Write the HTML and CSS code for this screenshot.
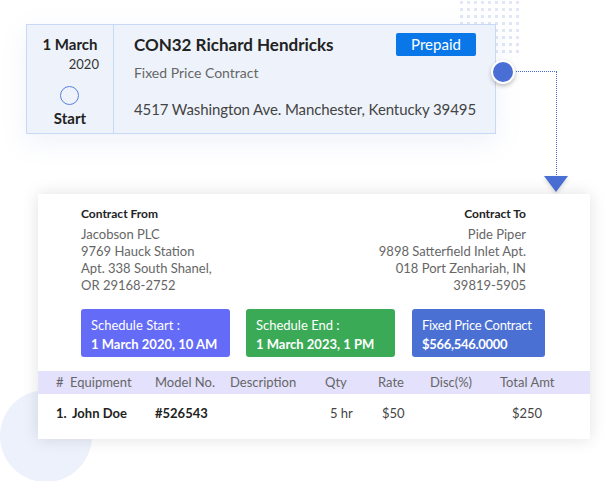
FILE: index.html
```html
<!DOCTYPE html>
<html lang="en">
<head>
    <meta charset="UTF-8">
    <meta name="viewport" content="width=device-width, initial-scale=1.0">
    <title>Contract</title>
    <link rel="stylesheet" href="styles.css">
</head>
<body>
    <div class="scene">
        <div class="dots"></div>
        <div class="blob"></div>
        <div class="link-h"></div>
        <div class="link-v"></div>
        <div class="arrow"></div>

        <div class="summary">
            <div class="date-col">
                <div class="day">1 March</div>
                <div class="year">2020</div>
                <div class="ring"></div>
                <div class="stage">Start</div>
            </div>
            <div class="info-col">
                <div class="title-row">
                    <div class="title">CON32 Richard Hendricks</div>
                    <div class="badge">Prepaid</div>
                </div>
                <div class="type">Fixed Price Contract</div>
                <div class="address">4517 Washington Ave. Manchester, Kentucky 39495</div>
            </div>
            <div class="knob"></div>
        </div>

        <div class="detail">
            <div class="parties">
                <div class="party">
                    <div class="party-head">Contract From</div>
                    <div>Jacobson PLC</div>
                    <div>9769 Hauck Station</div>
                    <div>Apt. 338 South Shanel,</div>
                    <div>OR 29168-2752</div>
                </div>
                <div class="party right">
                    <div class="party-head">Contract To</div>
                    <div>Pide Piper</div>
                    <div>9898 Satterfield Inlet Apt.</div>
                    <div>018 Port Zenhariah, IN</div>
                    <div>39819-5905</div>
                </div>
            </div>

            <div class="tiles">
                <div class="tile purple">
                    <div class="tile-label">Schedule Start :</div>
                    <div class="tile-value">1 March 2020, 10 AM</div>
                </div>
                <div class="tile green">
                    <div class="tile-label">Schedule End :</div>
                    <div class="tile-value">1 March 2023, 1 PM</div>
                </div>
                <div class="tile blue">
                    <div class="tile-label">Fixed Price Contract</div>
                    <div class="tile-value">$566,546.0000</div>
                </div>
            </div>

            <div class="table">
                <div class="trow thead">
                    <div>#</div>
                    <div>Equipment</div>
                    <div>Model No.</div>
                    <div>Description</div>
                    <div>Qty</div>
                    <div>Rate</div>
                    <div>Disc(%)</div>
                    <div>Total Amt</div>
                </div>
                <div class="trow tbody">
                    <div class="strong">1.</div>
                    <div class="strong">John Doe</div>
                    <div class="strong">#526543</div>
                    <div></div>
                    <div class="num-qty">5 hr</div>
                    <div class="num-rate">$50</div>
                    <div></div>
                    <div class="num-total">$250</div>
                </div>
            </div>
        </div>
    </div>
</body>
</html>
```

FILE: styles.css
```css
body {
    margin: 0;
    background-color: white;
    font-family: Lato, "Open Sans", sans-serif;
    color: #333;
}
.scene {
    position: relative;
    width: 611px;
    height: 481px;
    padding-top: 24px;
    box-sizing: border-box;
    overflow: hidden;
}

/* decorations */
.dots {
    position: absolute;
    left: 458px;
    top: -1px;
    width: 63px;
    height: 56px;
    background-image: radial-gradient(circle, #e1e7f6 1.6px, transparent 2px);
    background-size: 7px 7px;
}
.blob {
    position: absolute;
    left: 0;
    top: 390px;
    width: 92px;
    height: 92px;
    border-radius: 50%;
    background-color: #edf1fb;
}
.link-h {
    position: absolute;
    left: 512px;
    top: 71px;
    width: 45px;
    border-top: 1px dotted #4a6fd4;
}
.link-v {
    position: absolute;
    left: 556px;
    top: 71px;
    height: 106px;
    border-left: 1px dotted #4a6fd4;
}
.arrow {
    position: absolute;
    left: 544px;
    top: 176px;
    width: 0;
    height: 0;
    border-left: 12px solid transparent;
    border-right: 12px solid transparent;
    border-top: 16px solid #4a6fd4;
    filter: drop-shadow(0 2px 2px rgba(0,0,0,0.15));
}

/* summary card */
.summary {
    position: relative;
    display: flex;
    width: 470px;
    height: 110px;
    margin-left: 26px;
    box-sizing: border-box;
    background-color: #eef3fb;
    border: 1px solid #c9d8f5;
    box-shadow: 0 8px 24px rgba(120,150,210,0.12);
}
.date-col {
    width: 89px;
    border-right: 1px solid #c9d8f5;
    display: flex;
    flex-direction: column;
    align-items: center;
    padding-top: 10px;
    box-sizing: border-box;
}
.day {
    font-size: 15px;
    font-weight: bold;
    color: #222;
}
.year {
    align-self: flex-end;
    margin-right: 14px;
    margin-top: 3px;
    font-size: 13px;
    color: #333;
}
.ring {
    width: 17px;
    height: 17px;
    border: 1.5px solid #5b7fe0;
    border-radius: 50%;
    margin-top: 14px;
}
.stage {
    font-size: 15px;
    font-weight: bold;
    color: #222;
    margin-top: 4px;
}
.info-col {
    flex: 1;
    padding: 8px 19px 0 20px;
}
.title-row {
    display: flex;
    justify-content: space-between;
    align-items: center;
}
.title {
    font-size: 17px;
    font-weight: bold;
    color: #222;
}
.badge {
    width: 80px;
    height: 23px;
    line-height: 23px;
    text-align: center;
    background-color: #0a77e8;
    color: white;
    font-size: 15px;
    border-radius: 2px;
}
.type {
    margin-top: 8px;
    font-size: 14px;
    color: #666;
}
.address {
    margin-top: 19px;
    font-size: 15px;
    color: #444;
    white-space: nowrap;
    letter-spacing: -0.1px;
}
.knob {
    position: absolute;
    right: -20px;
    top: 35px;
    width: 20px;
    height: 20px;
    border-radius: 50%;
    background-color: #4a6fd4;
    border: 2px solid white;
    box-shadow: 0 2px 4px rgba(0,0,0,0.25);
}

/* detail card */
.detail {
    position: relative;
    width: 552px;
    height: 245px;
    margin: 60px 0 0 38px;
    box-sizing: border-box;
    background-color: white;
    box-shadow: 0 0 16px rgba(0,0,0,0.12);
    padding-top: 11px;
}
.parties {
    display: flex;
    justify-content: space-between;
    padding: 0 64px 0 43px;
    font-size: 13px;
    line-height: 17px;
    color: #666;
}
.party.right {
    text-align: right;
}
.party-head {
    font-size: 12px;
    font-weight: bold;
    color: #222;
    margin-bottom: 4px;
}
.tiles {
    display: flex;
    gap: 16px;
    padding-left: 43px;
    margin-top: 15px;
}
.tile {
    width: 149px;
    height: 48px;
    box-sizing: border-box;
    padding: 8px 10px 0 10px;
    border-radius: 3px;
    color: white;
    font-size: 13px;
    white-space: nowrap;
}
.tile.blue {
    width: 133px;
    margin-left: 1px;
    background-color: #4a70d4;
    letter-spacing: -0.3px;
}
.tile.purple {
    background-color: #636bf7;
}
.tile.green {
    background-color: #3aaa56;
}
.tile-value {
    font-weight: bold;
    margin-top: 3px;
}
.table {
    margin-top: 14px;
}
.trow {
    display: grid;
    grid-template-columns: 14px 85px 75px 95px 53px 52px 70px 1fr;
    padding-left: 18px;
    font-size: 13px;
}
.thead {
    height: 23px;
    line-height: 23px;
    background-color: #e3e1fc;
    color: #666;
}
.tbody {
    height: 38px;
    line-height: 38px;
    color: #444;
}
.strong {
    font-weight: bold;
    color: #222;
}
.tbody .strong:nth-child(2) {
    padding-left: 2px;
}
.num-qty {
    padding-left: 5px;
}
.num-rate {
    padding-left: 4px;
}
.num-total {
    padding-left: 12px;
}
```
